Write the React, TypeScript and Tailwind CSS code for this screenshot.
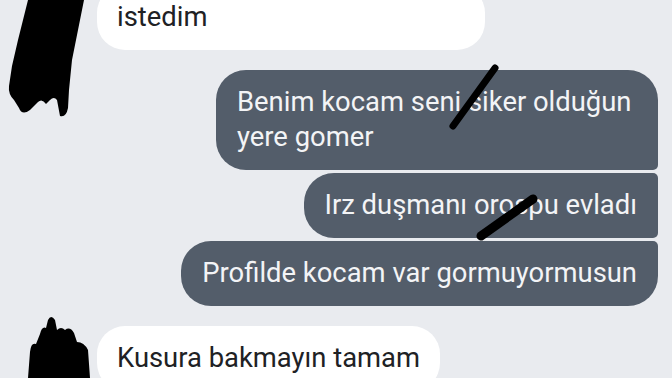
import React from 'react';

export default function App() {
  const outgoing = [
    { id: 'o1', lines: ['Benim kocam seni siker olduğun', 'yere gomer'], shape: 'rounded-l-[30px] rounded-tr-[30px] rounded-br-[5px]', w: 'w-[442px]' },
    { id: 'o2', lines: ['Irz duşmanı orospu evladı'], shape: 'rounded-l-[30px] rounded-r-[5px]', w: '' },
    { id: 'o3', lines: ['Profilde kocam var gormuyormusun'], shape: 'rounded-l-[30px] rounded-tr-[5px] rounded-br-[30px]', w: '' },
  ];

  return (
    <div
      className="relative w-[672px] h-[378px] overflow-hidden bg-[#e9ebef] text-[27.4px] leading-[35px]"
      style={{ fontFamily: 'Roboto, "Noto Sans", sans-serif' }}
    >
      <div className="flex flex-col">
        {/* incoming, cut at the top */}
        <div className="pl-[97px] mt-[-15px]">
          <div className="w-[388px] bg-white rounded-[28px] px-[20px] pt-[15px] pb-[15px] text-[#202124]">
            istedim
          </div>
        </div>

        {/* outgoing group */}
        <div className="flex flex-col items-end gap-[3px] pr-[14px] mt-[20px]">
          {outgoing.map((m) => (
            <div
              key={m.id}
              className={`bg-[#535d6a] text-[#f3f4f6] px-[21px] py-[15px] whitespace-nowrap ${m.shape} ${m.w}`}
            >
              {m.lines.map((l, i) => (
                <div key={i}>{l}</div>
              ))}
            </div>
          ))}
        </div>

        {/* incoming */}
        <div className="pl-[97px] mt-[20px]">
          <div className="inline-block bg-white rounded-[28px] px-[20px] pt-[15px] pb-[15px] text-[#202124]">
            Kusura bakmayın tamam
          </div>
        </div>
      </div>

      {/* redaction marks */}
      <svg className="absolute inset-0 pointer-events-none" width="672" height="378" viewBox="0 0 672 378">
        <path
          d="M28,0 L84,0 L78,30 L72,60 L69,90 L68,108 Q66,118 60,116 L57,100 Q54,96 50,100 L46,104 Q42,98 38,102 L30,110 Q22,116 19,108 L14,100 Q8,94 9,86 L12,66 L18,40 Z"
          fill="#000"
        />
        <path
          d="M28,378 L30,352 Q31,342 36,344 L40,334 Q42,326 46,328 L48,320 Q51,314 55,320 L57,330 Q61,326 65,330 Q70,326 74,333 L77,342 Q84,342 88,350 L90,378 Z"
          fill="#000"
        />
        <line x1="453" y1="126" x2="495" y2="68" stroke="#000" strokeWidth="7" strokeLinecap="round" />
        <line x1="481" y1="236" x2="533" y2="199" stroke="#000" strokeWidth="9" strokeLinecap="round" />
      </svg>
    </div>
  );
}
